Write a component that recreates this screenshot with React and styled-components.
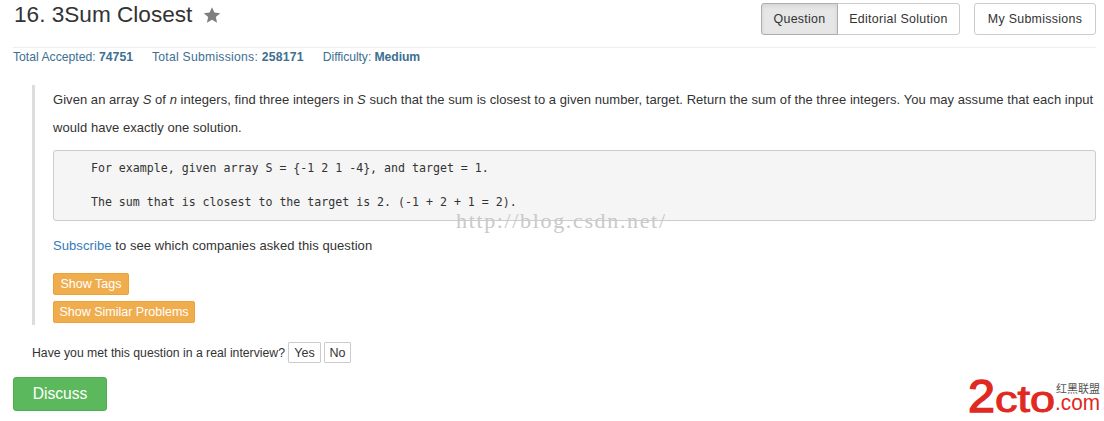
import React from "react";
import styled, { createGlobalStyle } from "styled-components";

const GlobalStyle = createGlobalStyle`
  html, body {
    margin: 0;
    background: #fff;
    color: #333;
    font-family: "Liberation Sans", Arial, sans-serif;
    font-size: 12px;
  }
`;

const Page = styled.div`
  position: relative;
  width: 1104px;
  height: 421px;
  overflow: hidden;
  box-sizing: border-box;
  padding: 3px 8px 0 13px;
`;

const Header = styled.header`
  display: flex;
  justify-content: space-between;
  height: 44px;
  border-bottom: 1px solid #eee;
`;

const TitleRow = styled.div`
  display: flex;
  align-items: flex-start;
  gap: 11px;
`;

const Title = styled.h1`
  margin: 0 0 0 1px;
  font-size: 22.6px;
  font-weight: 400;
  line-height: 24px;
  color: #333;
`;

const Star = styled.svg`
  width: 18px;
  height: 18px;
  margin-top: 3px;
  fill: #7f7f7f;
`;

const Tabs = styled.nav`
  display: flex;
  gap: 14px;
`;

const TabGroup = styled.div`
  display: flex;
`;

const Tab = styled.button`
  box-sizing: border-box;
  width: ${(p) => p.$width}px;
  height: 32px;
  padding: 0;
  margin-left: ${(p) => (p.$joined ? "-1px" : "0")};
  border: 1px solid ${(p) => (p.$active ? "#adadad" : "#ccc")};
  border-radius: ${(p) => p.$radius};
  background: ${(p) => (p.$active ? "#e6e6e6" : "#fff")};
  box-shadow: ${(p) => (p.$active ? "inset 0 2px 4px rgba(0,0,0,.08)" : "none")};
  font: 12.4px "Liberation Sans", Arial, sans-serif;
  letter-spacing: 0.3px;
  color: #333;
  position: relative;
  z-index: ${(p) => (p.$active ? 1 : 0)};
`;

const Stats = styled.div`
  display: flex;
  gap: 19px;
  height: 18px;
  font-size: 12.2px;
  line-height: 18px;
  color: #3d6f92;
`;

const Stat = styled.span`
  letter-spacing: ${(p) => p.$spacing || 0}px;

  b {
    font-weight: 700;
  }
`;

const Quote = styled.section`
  box-sizing: border-box;
  width: 1064px;
  height: 240px;
  margin: 19px 0 0 19px;
  padding: 1px 0 0 18px;
  border-left: 3px solid #ddd;
`;

const Description = styled.p`
  margin: 0;
  font-size: 13px;
  letter-spacing: 0.05px;
  line-height: 28px;
  color: #333;
`;

const Code = styled.pre`
  box-sizing: border-box;
  height: 71px;
  margin: 8px 0 0;
  padding: 9px 0 0 9px;
  background: #f5f5f5;
  border: 1px solid #ccc;
  border-radius: 3px;
  font-family: "DejaVu Sans Mono", "Liberation Mono", monospace;
  font-size: 11.6px;
  line-height: 17px;
  color: #333;
`;

const Companies = styled.p`
  margin: 15px 0 0;
  font-size: 13px;
  letter-spacing: 0.08px;
  line-height: 20px;
`;

const Subscribe = styled.a`
  color: #337ab7;
  text-decoration: none;
`;

const TagButtons = styled.div`
  display: flex;
  flex-direction: column;
  align-items: flex-start;
  gap: 6px;
  margin-top: 17px;
`;

const OrangeButton = styled.button`
  box-sizing: border-box;
  width: ${(p) => p.$width}px;
  height: 22px;
  padding: 0;
  background: #f0ad4e;
  border: 1px solid #eea236;
  border-radius: 2px;
  color: #fff;
  font: 12.5px "Liberation Sans", Arial, sans-serif;
`;

const InterviewRow = styled.div`
  display: flex;
  align-items: center;
  gap: 3px;
  height: 21px;
  margin: 17px 0 0 19px;
`;

const InterviewLabel = styled.span`
  font-size: 12.24px;
  color: #333;
`;

const SmallButton = styled.button`
  box-sizing: border-box;
  width: ${(p) => p.$width}px;
  height: 21px;
  padding: 0;
  background: #fff;
  border: 1px solid #ccc;
  border-radius: 1px;
  color: #333;
  font: 12.5px "Liberation Sans", Arial, sans-serif;
`;

const Discuss = styled.button`
  display: block;
  box-sizing: border-box;
  width: 94px;
  height: 34px;
  margin-top: 14px;
  padding: 0;
  background: #5cb85c;
  border: 1px solid #4cae4c;
  border-radius: 3px;
  color: #fff;
  font: 15.6px "Liberation Sans", Arial, sans-serif;
`;

const Watermark = styled.div`
  position: absolute;
  left: 456px;
  top: 209px;
  font-family: "Liberation Serif", serif;
  font-size: 22px;
  line-height: 24px;
  letter-spacing: 1.65px;
  color: #c9c9c9;
`;

const Logo = styled.svg`
  position: absolute;
  left: 960px;
  top: 361px;
  width: 144px;
  height: 60px;
`;

export default function App() {
  return (
    <Page>
      <GlobalStyle />
      <Header>
        <TitleRow>
          <Title>16. 3Sum Closest</Title>
          <Star viewBox="0 0 24 24">
            <path d="M12 1.5l3.2 7.2 7.8.8-5.9 5.2 1.7 7.7L12 18.4l-6.8 4 1.7-7.7L1 9.5l7.8-.8z" />
          </Star>
        </TitleRow>
        <Tabs>
          <TabGroup>
            <Tab $width={77} $active $radius="3px 0 0 3px">Question</Tab>
            <Tab $width={123} $joined $radius="0 3px 3px 0">Editorial Solution</Tab>
          </TabGroup>
          <Tab $width={122} $radius="3px">My Submissions</Tab>
        </Tabs>
      </Header>
      <Stats>
        <Stat>Total Accepted: <b>74751</b></Stat>
        <Stat $spacing={0.25}>Total Submissions: <b>258171</b></Stat>
        <Stat $spacing={-0.08}>Difficulty: <b>Medium</b></Stat>
      </Stats>
      <Quote>
        <Description>
          Given an array <i>S</i> of <i>n</i> integers, find three integers in <i>S</i> such that the sum is closest to a given number, target. Return the sum of the three integers. You may assume that each input would have exactly one solution.
        </Description>
        <Code>{`    For example, given array S = {-1 2 1 -4}, and target = 1.

    The sum that is closest to the target is 2. (-1 + 2 + 1 = 2).`}</Code>
        <Companies>
          <Subscribe href="#">Subscribe</Subscribe> to see which companies asked this question
        </Companies>
        <TagButtons>
          <OrangeButton $width={76}>Show Tags</OrangeButton>
          <OrangeButton $width={142}>Show Similar Problems</OrangeButton>
        </TagButtons>
      </Quote>
      <InterviewRow>
        <InterviewLabel>Have you met this question in a real interview?</InterviewLabel>
        <SmallButton $width={33}>Yes</SmallButton>
        <SmallButton $width={27}>No</SmallButton>
      </InterviewRow>
      <Discuss>Discuss</Discuss>
      <Watermark>http://blog.csdn.net/</Watermark>
      <Logo viewBox="0 0 144 60">
        <text x="8" y="51" fontFamily="Liberation Sans" fontSize="46" fill="#e0291f" stroke="#e0291f" strokeWidth="1.5" textLength="27" lengthAdjust="spacingAndGlyphs">2</text>
        <text x="35" y="51" fontFamily="Liberation Sans" fontSize="36" fill="#e0291f" stroke="#e0291f" strokeWidth="1" textLength="60" lengthAdjust="spacingAndGlyphs">cto</text>
        <text x="96" y="32" fontFamily="Noto Sans CJK SC" fontSize="11" fill="#555" textLength="44" lengthAdjust="spacingAndGlyphs">红黑联盟</text>
        <text x="95" y="49" fontFamily="Liberation Sans" fontSize="22" fill="#e0291f" textLength="45" lengthAdjust="spacingAndGlyphs">.com</text>
      </Logo>
    </Page>
  );
}
